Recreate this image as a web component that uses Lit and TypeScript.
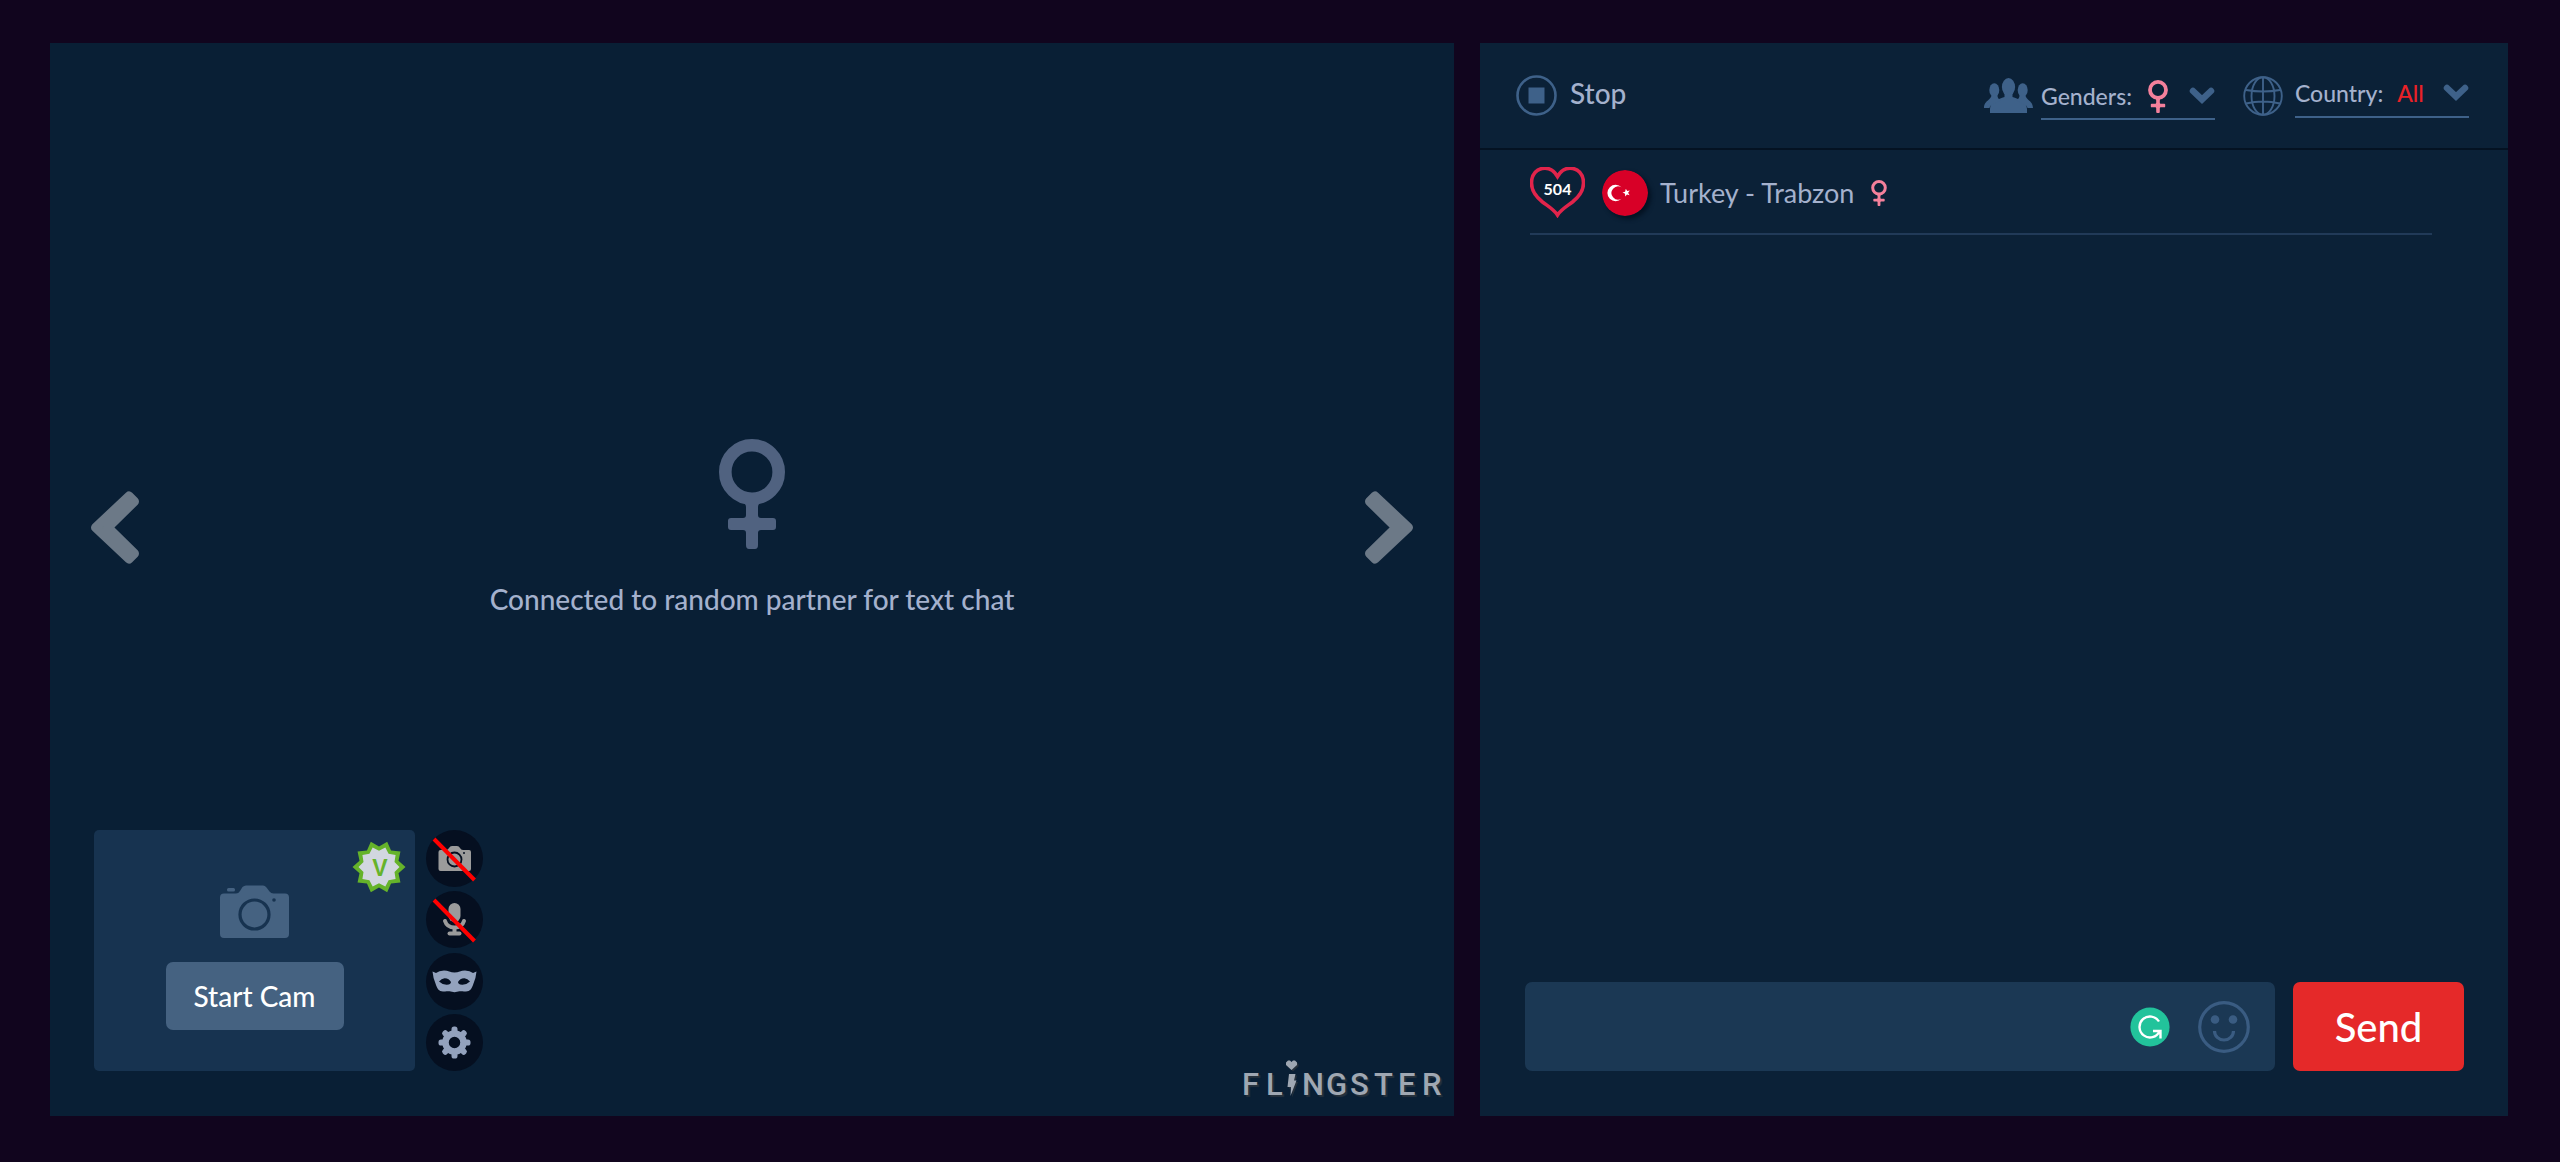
import { LitElement, html, css, svg } from "lit";
import { customElement } from "lit/decorators.js";

const starPoints = (outer: number, inner: number, tips = 10) =>
  Array.from({ length: tips * 2 }, (_, i) => {
    const r = i % 2 ? inner : outer;
    const a = (i * Math.PI) / tips;
    return `${(r * Math.cos(a)).toFixed(2)},${(r * Math.sin(a)).toFixed(2)}`;
  }).join(" ");

const female = (cls: string) => html`
  <svg class="female ${cls}" viewBox="0 0 66 110" aria-hidden="true">
    <circle cx="33" cy="33" r="26.7" fill="none" stroke="currentColor" stroke-width="12.6" />
    <path
      fill="currentColor"
      d="M22 62q5 2 5 6v8q0 3-3 3H12q-3 0-3 3v6q0 3 3 3h12q3 0 3 3v12q0 4 3 4h6q3 0 3-4v-12q0-3 3-3h12q3 0 3-3v-6q0-3-3-3H42q-3 0-3-3v-8q0-4 5-6z"
    />
  </svg>
`;

const arrow = html`
  <svg class="arrow-icon" viewBox="0 0 48 73" aria-hidden="true">
    <path
      d="M4.500 36.500 38 5 43.500 10.500 17 36.500 43.500 62.500 38 68z"
      fill="currentColor"
      stroke="currentColor"
      stroke-width="9"
      stroke-linejoin="round"
    />
  </svg>
`;

const chevron = html`
  <svg class="chevron" viewBox="0 0 26 18" aria-hidden="true">
    <path d="M4 4 13 12.500 22 4" fill="none" stroke="currentColor" stroke-width="6.500" stroke-linecap="round" />
  </svg>
`;

const slash = svg`<path d="M8 9 48.500 50" stroke="#ff0000" stroke-width="4" />`;

const sidePerson = svg`
  <ellipse cx="10.300" cy="12" rx="5" ry="6.800" />
  <path d="M7 15C9.500 22 0 21.500 0 30H5.500C6 26 13 25.500 16.500 22 13.500 20.500 13 18 14 15z" />
`;

const gearTeeth = Array.from(
  { length: 8 },
  (_, i) => svg`<rect x="-3" y="-16" width="6" height="8" rx="2.600" transform="rotate(${i * 45})" />`,
);

@customElement("app-root")
export class AppRoot extends LitElement {
  static styles = css`
    :host {
      display: block;
      font-family: Lato, "Open Sans", sans-serif;
      color: #a4b1cd;
    }
    * {
      box-sizing: border-box;
    }
    button,
    select,
    input {
      font: inherit;
      color: inherit;
      border: 0;
      margin: 0;
      padding: 0;
      background: none;
    }
    button {
      cursor: pointer;
    }
    svg {
      display: block;
      flex: none;
    }
    .page {
      min-height: 100vh;
      display: grid;
      grid-template-columns: 1404fr 1028fr;
      gap: 26px;
      padding: 43px 52px 46px 50px;
      background: #11051e;
    }

    /* Video side */
    .stage {
      display: flex;
      flex-direction: column;
      min-width: 0;
      background: #091f35;
    }
    .viewer {
      flex: 1;
      display: flex;
      align-items: center;
      justify-content: space-between;
      padding: 182px 41px 0;
    }
    .arrow {
      color: #6c7987;
    }
    .arrow.next {
      rotate: 180deg;
    }
    .arrow-icon {
      width: 48px;
      height: 73px;
    }
    .status {
      display: flex;
      flex-direction: column;
      align-items: center;
      gap: 33px;
    }
    .status p {
      margin: 0;
      font-size: 28px;
      font-weight: 500;
      line-height: 34px;
      text-align: center;
    }
    .female.large {
      width: 66px;
      height: 110px;
      color: #506280;
    }
    .dock {
      display: flex;
      align-items: flex-end;
      justify-content: space-between;
      padding: 0 12px 13px 44px;
    }
    .self {
      display: flex;
      gap: 11px;
      height: 241px;
      margin-bottom: 32px;
    }
    .cam {
      position: relative;
      width: 321px;
      display: flex;
      flex-direction: column;
      align-items: center;
      gap: 24px;
      padding-top: 55px;
      border-radius: 5px;
      background: #173350;
    }
    .cam-icon {
      width: 69px;
      height: 53px;
      color: #456281;
    }
    .badge {
      position: absolute;
      top: 10px;
      right: 9px;
      width: 54px;
      height: 54px;
    }
    .badge text {
      font: bold 23px "Liberation Sans", Arial, sans-serif;
    }
    .start {
      width: 178px;
      height: 68px;
      border-radius: 7px;
      background: #456281;
      color: #fff;
      font-size: 28px;
      font-weight: 500;
      line-height: 34px;
    }
    .tools {
      display: flex;
      flex-direction: column;
      justify-content: space-between;
    }
    .tool {
      width: 57px;
      height: 57px;
      border-radius: 50%;
      background: #050f20;
      color: #93a2bd;
    }
    .tool.off {
      color: #9b9b9b;
    }
    .tool svg {
      width: 57px;
      height: 57px;
    }
    .logo {
      display: flex;
      align-items: flex-end;
      color: #9fa7b2;
      text-decoration: none;
      font: 500 31px/36px Roboto, "Open Sans", sans-serif;
      text-shadow: 2px 2px 1px #26313c;
    }
    .logo span {
      width: 24px;
    }
    .logo span:last-child {
      width: 20px;
    }
    .logo svg {
      width: 14px;
      height: 39px;
      margin: 0 2px 4px -4px;
    }

    /* Chat side */
    .chat {
      display: flex;
      flex-direction: column;
      min-width: 0;
      background: #0b2137;
    }
    .bar {
      display: flex;
      align-items: center;
      justify-content: space-between;
      height: 107px;
      padding: 0 39px 0 36px;
      border-bottom: 2px solid #041222;
    }
    .stop {
      display: flex;
      align-items: center;
      gap: 13px;
      font-size: 28px;
      font-weight: 500;
      line-height: 34px;
    }
    .stop span {
      padding-bottom: 6px;
    }
    .stop svg {
      width: 41px;
      height: 41px;
    }
    .filters {
      display: flex;
      align-items: center;
      gap: 28px;
      color: #3e6189;
    }
    .filter {
      display: flex;
      align-items: center;
      gap: 8px;
    }
    .people {
      width: 49px;
      height: 35px;
    }
    .globe {
      width: 40px;
      height: 40px;
      margin-right: 4px;
    }
    .field {
      display: flex;
      align-items: center;
      width: 174px;
      height: 48px;
      border-bottom: 2px solid #3e6189;
      font-size: 23px;
      font-weight: 500;
      line-height: 28px;
    }
    .field.genders {
      gap: 16px;
      padding-top: 3px;
    }
    .field.country {
      gap: 14px;
      height: 45px;
      padding-bottom: 3px;
    }
    .caption {
      color: #a4b1cd;
    }
    .chevron {
      width: 26px;
      height: 18px;
    }
    .genders .chevron {
      margin-left: auto;
    }
    .female.small {
      width: 20px;
      height: 33px;
      color: #f4809b;
    }
    .picker {
      flex: 1;
      display: grid;
      align-items: center;
    }
    .picker select {
      grid-area: 1 / 1;
      width: 100%;
      appearance: none;
      color: #ea2127;
      line-height: 28px;
      cursor: pointer;
    }
    .picker .chevron {
      grid-area: 1 / 1;
      justify-self: end;
      pointer-events: none;
    }
    .log {
      flex: 1;
      padding: 0 76px 0 50px;
    }
    .peer {
      display: flex;
      align-items: center;
      padding: 17px 0 15px;
      border-bottom: 2px solid #213a58;
      font-size: 27px;
      line-height: 34px;
    }
    .score {
      display: grid;
      place-items: center;
      margin-right: 17px;
      color: #fff;
      font-size: 16px;
      font-weight: 700;
      line-height: 20px;
    }
    .score > * {
      grid-area: 1 / 1;
    }
    .score svg {
      width: 55px;
      height: 51px;
    }
    .score span {
      padding-bottom: 7px;
    }
    .flag {
      width: 46px;
      height: 46px;
      margin-right: 12px;
      border-radius: 50%;
      box-shadow: 3px 3px 4px #041222;
    }
    .female.mini {
      width: 16px;
      height: 26px;
      margin-left: 17px;
      color: #f4809b;
    }
    .composer {
      display: flex;
      gap: 18px;
      height: 134px;
      padding: 0 44px 45px 45px;
    }
    .entry {
      flex: 1;
      display: flex;
      align-items: center;
      gap: 28px;
      min-width: 0;
      padding-right: 25px;
      border-radius: 7px;
      background: #1b3854;
    }
    .entry input {
      flex: 1;
      min-width: 0;
      height: 100%;
      padding: 0 20px;
      font-size: 28px;
      outline: none;
    }
    .assist svg {
      width: 40px;
      height: 40px;
    }
    .emoji svg {
      width: 52px;
      height: 52px;
    }
    .send {
      width: 171px;
      border-radius: 7px;
      background: #e52929;
      color: #fff;
      font-size: 40px;
      font-weight: 500;
      line-height: 48px;
    }
  `;

  private renderStage() {
    return html`
      <section class="stage">
        <div class="viewer">
          <button class="arrow" aria-label="Previous">${arrow}</button>
          <div class="status">
            ${female("large")}
            <p>Connected to random partner for text chat</p>
          </div>
          <button class="arrow next" aria-label="Next">${arrow}</button>
        </div>
        <div class="dock">
          <div class="self">
            <div class="cam">
              <svg class="badge" viewBox="-27 -27 54 54" aria-hidden="true">
                <polygon points=${starPoints(26.5, 20.5)} fill="#65b32a" />
                <polygon points=${starPoints(20.5, 16.3)} fill="#d2d7e0" />
                <text x="1" y="9" text-anchor="middle" fill="#65b32a">V</text>
              </svg>
              <svg class="cam-icon" viewBox="0 0 69 53" aria-hidden="true">
                <rect x="7" y="3" width="8" height="3.500" rx="1.500" fill="currentColor" />
                <path
                  fill="currentColor"
                  d="M4 8.500H16q2.500 0 4-2.500l2.500-4Q24 .5 26 .5h17q2 0 3.500 2l3 4q1.500 2 4 2H65q4 0 4 4V49q0 4-4 4H4q-4 0-4-4V12.500q0-4 4-4z"
                />
                <circle cx="34.500" cy="29.500" r="14.500" fill="none" stroke="#173350" stroke-width="3.200" />
                <circle cx="54" cy="15" r="1.800" fill="#173350" />
              </svg>
              <button class="start">Start Cam</button>
            </div>
            <div class="tools">
              <button class="tool off" aria-label="Camera">
                <svg viewBox="0 0 57 57">
                  <path
                    fill="currentColor"
                    d="M14.500 20H20q2 0 3-2t3-2h5q2 0 3 2t3 2h6q2 0 2 2v17q0 2-2 2H14.500q-2 0-2-2V22q0-2 2-2z"
                  />
                  <circle cx="28.500" cy="29.500" r="7" fill="none" stroke="#050f20" stroke-width="1.800" />
                  <circle cx="38" cy="23" r="1" fill="#050f20" />
                  ${slash}
                </svg>
              </button>
              <button class="tool off" aria-label="Microphone">
                <svg viewBox="0 0 57 57">
                  <rect x="22.500" y="12" width="12" height="19" rx="6" fill="currentColor" />
                  <path d="M19 30q2 6.500 9.500 6.500T38 30" fill="none" stroke="currentColor" stroke-width="4" stroke-linecap="round" />
                  <path d="M28.500 35v7" stroke="currentColor" stroke-width="4" />
                  <path d="M23.500 42.500h10" stroke="currentColor" stroke-width="4" stroke-linecap="round" />
                  ${slash}
                </svg>
              </button>
              <button class="tool" aria-label="Mask">
                <svg viewBox="0 0 57 57">
                  <path
                    fill="currentColor"
                    fill-rule="evenodd"
                    d="M6.500 18.500l3.500 1.500q3-2.600 8-2.600c4 0 6.500 2.100 10.500 2.100s6.500-2.100 10.500-2.100q5 0 8 2.600l3.500-1.500q-.5 6-3 12c-1.500 5-3.500 8-7.500 8-3 0-4.500-.2-6.500-.2-2 0-3 .9-5 .9s-3-.9-5-.9-3.500.2-6.500.2c-4 0-6-3-7.500-8q-2.500-6-3-12zM13 28.500q3 3 7.500 3.200c3 .1 4.500-1 4.500-2.700q-2-4-6.500-3.800-3 .3-5.500 3.300zM44 28.500q-3 3-7.500 3.200c-3 .1-4.500-1-4.500-2.700q2-4 6.500-3.800 3 .3 5.500 3.300z"
                  />
                </svg>
              </button>
              <button class="tool" aria-label="Settings">
                <svg viewBox="0 0 57 57">
                  <g transform="translate(28.500 28.500)" fill="currentColor">
                    ${gearTeeth}
                    <circle r="9" fill="none" stroke="currentColor" stroke-width="6.500" />
                  </g>
                </svg>
              </button>
            </div>
          </div>
          <a class="logo" href="#" aria-label="Flingster">
            <span>F</span><span>L</span>
            <svg viewBox="0 0 14 39" aria-hidden="true">
              <g id="glyph" fill="#26313c" transform="translate(1.500 1.500)">
                <path d="M5.500 10 0 5V2.500L2 .5h2L5.500 2 7 .5h2l2 2V5z" />
                <path d="M3 14h6.500L8 20.500h2.500L4.500 36l.5-9H1.500z" />
              </g>
              <g fill="#9fa7b2">
                <path d="M5.500 10 0 5V2.500L2 .5h2L5.500 2 7 .5h2l2 2V5z" />
                <path d="M3 14h6.500L8 20.500h2.500L4.500 36l.5-9H1.500z" />
              </g>
            </svg>
            <span>N</span><span>G</span><span>S</span><span>T</span><span>E</span><span>R</span>
          </a>
        </div>
      </section>
    `;
  }

  private renderBar() {
    return html`
      <header class="bar">
        <button class="stop">
          <svg viewBox="0 0 41 41" aria-hidden="true">
            <circle cx="20.500" cy="20.500" r="19" fill="none" stroke="#3e6189" stroke-width="2.600" />
            <rect x="12.500" y="12.500" width="16" height="16" fill="#3e6189" />
          </svg>
          <span>Stop</span>
        </button>
        <div class="filters">
          <div class="filter">
            <svg class="people" viewBox="0 0 49 35" fill="currentColor" aria-hidden="true">
              <ellipse cx="24.500" cy="9" rx="6.600" ry="9" />
              <path d="M20.500 13h8v6c6 2 14.500 5 14.500 12v4H6v-4c0-7 8.500-10 14.500-12z" />
              ${sidePerson}
              <g transform="translate(49 0) scale(-1 1)">${sidePerson}</g>
            </svg>
            <button class="field genders" aria-haspopup="listbox">
              <span class="caption">Genders:</span>${female("small")}${chevron}
            </button>
          </div>
          <div class="filter">
            <svg class="globe" viewBox="0 0 40 40" fill="none" stroke="currentColor" stroke-width="1.900" aria-hidden="true">
              <circle cx="20" cy="20" r="18.800" />
              <ellipse cx="20" cy="20" rx="11.500" ry="18.800" />
              <path d="M20 1v38M3 14q17 3 34 0M3 27.500q17-4 34 0" />
            </svg>
            <div class="field country">
              <label class="caption" for="country">Country:</label>
              <div class="picker">
                <select id="country">
                  <option>All</option>
                </select>
                ${chevron}
              </div>
            </div>
          </div>
        </div>
      </header>
    `;
  }

  private renderPeer() {
    return html`
      <div class="peer">
        <div class="score">
          <svg viewBox="0 0 55 51" aria-hidden="true">
            <path
              d="M27.500 9.500C31 3.500 35 1.200 40 1.200c8 0 13.500 6 13.500 14.800 0 8-4 13.500-11 19-6 4.500-11.500 7.500-15 13-3.500-5.500-9-8.500-15-13-7-5.500-11-11-11-19C1.500 7.200 7 1.200 15 1.200c5 0 9 2.300 12.500 8.300z"
              fill="none"
              stroke="#e1244b"
              stroke-width="3.600"
            />
          </svg>
          <span>504</span>
        </div>
        <svg class="flag" viewBox="0 0 46 46" aria-hidden="true">
          <circle cx="23" cy="23" r="23" fill="#d80027" />
          <path fill="#fff" d="M19.500 17.300a6.600 6.600 0 1 0 0 11.400 8.200 8.200 0 1 1 0-11.400z" />
          <path fill="#fff" d="m23.800 18.700 1.400 2.300 2.600-.5-1.700 2.300 1.500 2.500-2.600-.9-1.900 2v-2.700l-2.600-1.100 2.600-.8z" />
        </svg>
        <span>Turkey - Trabzon</span>
        ${female("mini")}
      </div>
    `;
  }

  private renderComposer() {
    return html`
      <form class="composer" @submit=${(e: Event) => e.preventDefault()}>
        <div class="entry">
          <input type="text" aria-label="Message" autocomplete="off" />
          <button class="assist" type="button" aria-label="Check writing">
            <svg viewBox="0 0 40 40">
              <circle cx="20" cy="20" r="19.600" fill="#22c39b" />
              <path
                d="M29 14.500A10.500 10.500 0 1 0 29.500 24.500M23 24h7.500v7.500"
                fill="none"
                stroke="#fff"
                stroke-width="2.400"
                stroke-linejoin="miter"
              />
            </svg>
          </button>
          <button class="emoji" type="button" aria-label="Emoji">
            <svg viewBox="0 0 52 52">
              <circle cx="26" cy="26" r="24.300" fill="none" stroke="#3a5c82" stroke-width="3.200" />
              <circle cx="17" cy="18.500" r="4.300" fill="#3a5c82" />
              <circle cx="35" cy="18.500" r="4.300" fill="#3a5c82" />
              <path d="M16.500 30a9.500 9 0 0 0 19 0" fill="none" stroke="#3a5c82" stroke-width="3.200" />
            </svg>
          </button>
        </div>
        <button class="send">Send</button>
      </form>
    `;
  }

  render() {
    return html`
      <main class="page">
        ${this.renderStage()}
        <section class="chat">
          ${this.renderBar()}
          <div class="log">${this.renderPeer()}</div>
          ${this.renderComposer()}
        </section>
      </main>
    `;
  }
}
